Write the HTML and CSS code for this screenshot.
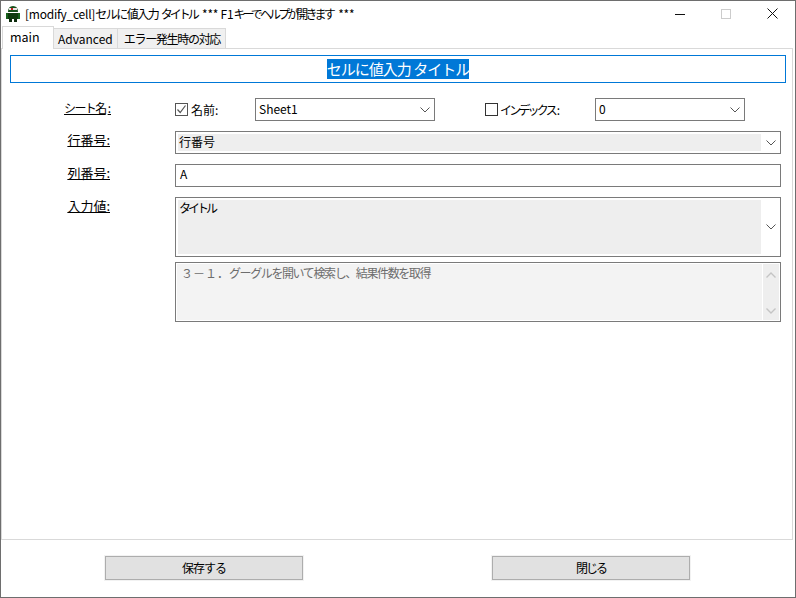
FILE: index.html
```html
<!DOCTYPE html>
<html lang="ja">
<head>
<meta charset="utf-8">
<title>modify_cell</title>
<link rel="stylesheet" href="styles.css">
</head>
<body>
<div class="window">
  <header class="titlebar">
    <svg class="app-icon" width="16" height="18" viewBox="0 0 16 18">
      <path d="M3 7 Q3 1 8 1 Q13 1 13 7Z" fill="#17501b"/>
      <rect x="4" y="3" width="8" height="2" fill="#e8e4e4"/>
      <rect x="6" y="3" width="2" height="2" fill="#c02020"/>
      <rect x="3" y="8" width="10" height="6" fill="#0f3a0f"/>
      <rect x="1" y="8" width="2" height="6" fill="#17601b"/>
      <rect x="13" y="8" width="2" height="6" fill="#17601b"/>
      <rect x="4" y="14" width="3" height="3" fill="#0c2a0c"/>
      <rect x="9" y="14" width="3" height="3" fill="#0c2a0c"/>
    </svg>
    <span class="title-text">[modify_cell]<span class="t15">セルに値入力</span> <span class="t30">タイトル</span> *** F1<span class="t26">キーでヘルプが開きます</span> ***</span>
    <div class="caption-buttons">
      <svg class="cap" width="10" height="10" viewBox="0 0 10 10"><path d="M0 5.5H10" stroke="#111" fill="none"/></svg>
      <svg class="cap" width="10" height="10" viewBox="0 0 10 10"><rect x=".5" y=".5" width="9" height="9" stroke="#ccc" fill="none"/></svg>
      <svg class="cap" width="11" height="11" viewBox="0 0 11 11"><path d="M.5 .5L10.5 10.5M10.5 .5L.5 10.5" stroke="#111" fill="none"/></svg>
    </div>
  </header>
  <nav class="tabs">
    <div class="tab active">main</div>
    <div class="tab">Advanced</div>
    <div class="tab err">エラー発生時の対応</div>
  </nav>
  <main class="panel">
    <div class="heading"><span class="selected">セルに値入力 タイトル</span></div>
    <div class="form">
      <div class="label kana">シート名<span class="colon">:</span></div>
      <div class="sheet-row">
        <span class="check checked"><svg width="13" height="13" viewBox="0 0 13 13"><path d="M2.5 6.5L5.2 9.5L10.5 2.5" stroke="#555" stroke-width="1.2" fill="none"/></svg></span>
        <span class="check-label name-label">名前:</span>
        <div class="combo sheet-combo"><span class="combo-text">Sheet1</span><svg class="chev" width="10" height="6" viewBox="0 0 10 6"><path d="M.5 .5L5 5L9.5 .5" stroke="#555" fill="none"/></svg></div>
        <span class="check second"></span>
        <span class="check-label index-label">インデックス<span class="colon">:</span></span>
        <div class="combo index-combo"><span class="combo-text">0</span><svg class="chev" width="10" height="6" viewBox="0 0 10 6"><path d="M.5 .5L5 5L9.5 .5" stroke="#555" fill="none"/></svg></div>
      </div>
      <div class="label">行番号:</div>
      <div class="combo wide gray"><div class="gray-fill">行番号</div><svg class="chev" width="10" height="6" viewBox="0 0 10 6"><path d="M.5 .5L5 5L9.5 .5" stroke="#555" fill="none"/></svg></div>
      <div class="label">列番号:</div>
      <div class="combo wide"><span class="combo-text plain">A</span></div>
      <div class="label">入力値:</div>
      <div class="combo wide gray tall"><div class="gray-fill katakana">タイトル</div><svg class="chev" width="10" height="6" viewBox="0 0 10 6"><path d="M.5 .5L5 5L9.5 .5" stroke="#555" fill="none"/></svg></div>
      <div class="spacer"></div>
      <div class="memo">
        <div class="memo-text">３－１．<span class="t14">グーグルを開いて検索し、結果件数を取得</span></div>
        <div class="scroll">
          <svg width="10" height="6" viewBox="0 0 10 6"><path d="M.5 5.5L5 1L9.5 5.5" stroke="#c4c4c4" stroke-width="1.4" fill="none"/></svg>
          <svg width="10" height="6" viewBox="0 0 10 6"><path d="M.5 .5L5 5L9.5 .5" stroke="#c4c4c4" stroke-width="1.4" fill="none"/></svg>
        </div>
      </div>
    </div>
  </main>
  <footer class="footer">
    <button class="btn save">保存する</button>
    <button class="btn close">閉じる</button>
  </footer>
</div>
</body>
</html>
```
FILE: styles.css
```css
* { box-sizing: border-box; }
html, body { margin: 0; height: 100%; overflow: hidden; background: #fff; }
body { font: 12px/16px "Noto Sans CJK JP", "Noto Sans", sans-serif; color: #000; }
.window {
  width: 796px; height: 598px;
  display: flex; flex-direction: column;
  border: 1px solid #6e6e6e;
  background: #fff;
}
.titlebar { height: 25px; flex: none; display: flex; align-items: center; padding-left: 4px; }
.app-icon { flex: none; margin-right: 4px; }
.title-text { font-size: 12px; white-space: nowrap; letter-spacing: -.25px; }
.t15 { letter-spacing: -1.5px; }
.t30 { letter-spacing: -3px; margin-right: 3px; }
.t26 { letter-spacing: -2.9px; margin-right: 3px; }
.t14 { letter-spacing: -1.4px; }
.caption-buttons { margin-left: auto; display: flex; align-items: center; gap: 36px; padding-right: 17px; }
.tabs { display: flex; height: 22px; flex: none; padding-left: 1px; position: relative; z-index: 1; }
.tab {
  height: 21px; margin-top: 2px; padding: 0 4px;
  background: #f0f0f0; border: 1px solid #d9d9d9; border-left: 0;
  white-space: nowrap; line-height: 19px;
}
.tab.err { letter-spacing: -1.3px; padding: 0 5px 0 6px; }
.tab.active {
  height: 23px; margin-top: 0; width: 52px; padding: 0 7px;
  background: #fff; border-left: 1px solid #d9d9d9; border-bottom: 0; line-height: 20px; font-size: 12.5px;
}
.panel {
  height: 492px; flex: none; width: 792px;
  border: 1px solid #d9d9d9;
  padding: 6px 6px 0 8px;
}
.heading {
  height: 28px; border: 1px solid #0078d7;
  display: flex; align-items: center; justify-content: center;
  font-size: 15px; line-height: 20px; letter-spacing: -1px;
}
.selected { background: #0078d7; color: #fff; }
.form {
  display: grid; grid-template-columns: 102px 606px; column-gap: 64px;
  row-gap: 10px;
  margin-top: 15px; margin-left: -1px;
}
.label { text-align: right; text-decoration: underline; padding: 1px 1px 0 0; font-size: 13px; letter-spacing: 0; }
.label.kana { font-size: 12px; letter-spacing: -1.6px; padding: 2px 0 0; }
.colon { letter-spacing: 0; margin-left: 2px; }
.sheet-row { display: flex; align-items: center; height: 23px; }
.check { width: 13px; height: 13px; border: 1px solid #333; flex: none; display: block; }
.check.checked { position: relative; border-color: #555; }
.check svg { position: absolute; top: -1px; left: -1px; }
.check-label { margin-left: 3px; flex: none; }
.name-label { width: 64px; }
.index-label { width: 95px; margin-left: 2px; letter-spacing: -2.8px; }
.second { margin-left: 50px; }
.combo {
  height: 23px; border: 1px solid #7a7a7a;
  display: flex; align-items: center; flex: none; background: #fff;
}
.sheet-combo { width: 180px; }
.index-combo { width: 150px; }
.combo-text { padding: 0 0 2px 3px; flex: 1; }
.combo-text.plain { padding-left: 4px; padding-bottom: 3px; }
.chev { flex: none; margin-right: 4px; }
.wide { width: 606px; }
.gray { padding: 2px 0 2px 2px; align-items: stretch; }
.gray .chev { align-self: center; margin-left: 5px; margin-right: 4px; }
.gray-fill { flex: 1; background: #eeeeee; padding-left: 1px; line-height: 15px; }
.gray-fill.katakana { letter-spacing: -3px; }
.tall { height: 60px; }
.memo {
  width: 606px; height: 60px; margin-top: -5px;
  border: 1px solid #7a7a7a; background: #f3f3f3; display: flex;
  box-shadow: inset 0 0 0 1px #fff;
}
.spacer { height: 0; }
.memo-text { flex: 1; padding: 2px 0 0 5px; color: #6d6d6d; white-space: nowrap; font-size: 12px; }
.scroll {
  width: 17px; margin: 1px; background: #eeeeee; border-left: 1px solid #fff;
  display: flex; flex-direction: column; justify-content: space-between; align-items: center; padding: 8px 0 6px;
}
.footer { flex: 1; display: flex; align-items: flex-start; padding: 16px 0 0 104px; gap: 189px; }
.btn {
  width: 198px; height: 24px; padding: 0;
  font: inherit; color: #000;
  background: #e1e1e1; border: 1px solid #adadad;
  box-shadow: 0 0 0 1px #f2f2f2;
}
.btn.save { letter-spacing: -1px; }
.btn.close { letter-spacing: -2px; }
```
